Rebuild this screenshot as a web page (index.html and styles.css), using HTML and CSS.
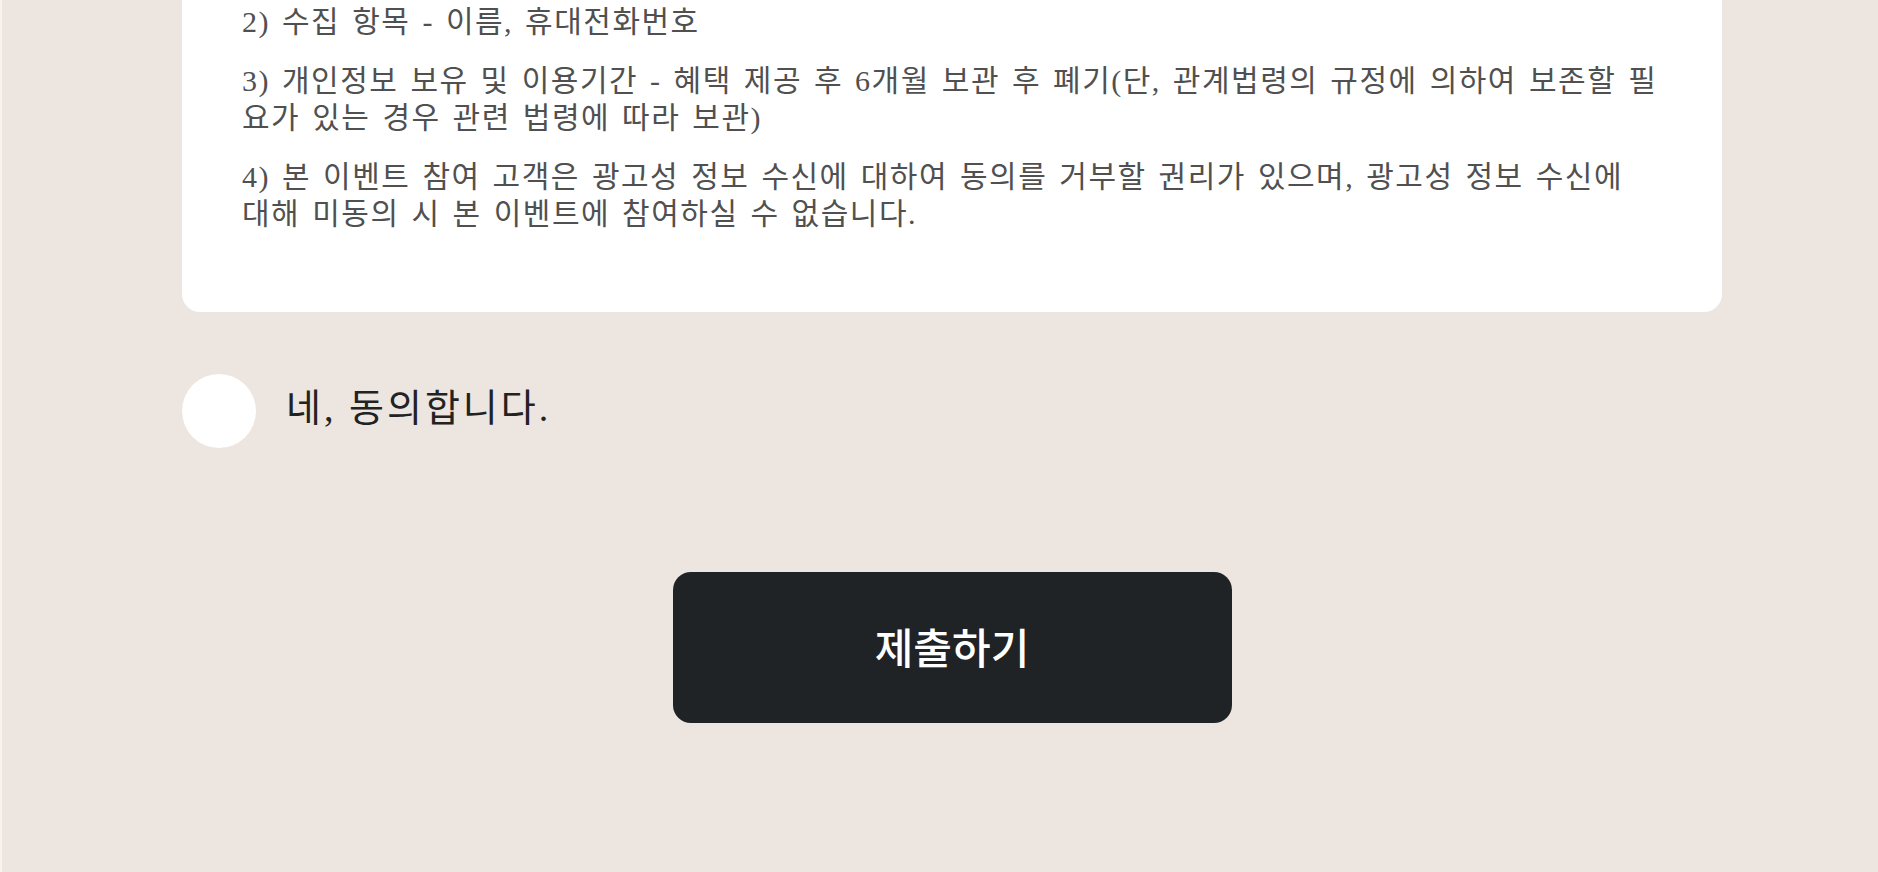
FILE: index.html
```html
<!DOCTYPE html>
<html lang="ko">
<head>
  <meta charset="UTF-8" />
  <title>이벤트 참여</title>
  <link rel="stylesheet" href="styles.css">
</head>
<body>
  <div class="wrap">
    <!-- 개인정보 수집 안내 -->
    <div class="terms">
      <p>2) 수집 항목 - 이름, 휴대전화번호</p>
      <p>3) 개인정보 보유 및 이용기간 - 혜택 제공 후 6개월 보관 후 폐기(단, 관계법령의 규정에 의하여 보존할 필요가 있는 경우 관련 법령에 따라 보관)</p>
      <p>4) 본 이벤트 참여 고객은 광고성 정보 수신에 대하여 동의를 거부할 권리가 있으며, 광고성 정보 수신에 대해 미동의 시 본 이벤트에 참여하실 수 없습니다.</p>
    </div>

    <label class="agree">
      <span class="agree-check"></span>
      <span class="agree-text">네, 동의합니다.</span>
    </label>

    <div class="submit-row">
      <button class="submit-btn">제출하기</button>
    </div>
  </div>
</body>
</html>
```

FILE: styles.css
```css
html, body {
  height: 100%;
}
body {
  margin: 0;
  padding-left: 24px;
  background-color: #ece5e0;
  border-left: 2px solid #f6f3f0;
  box-sizing: border-box;
  overflow: hidden;
}
.wrap {
  width: 1540px;
  margin: 0 auto;
}

/* 약관 박스 */
.terms {
  background-color: #fff;
  border-radius: 0 0 18px 18px;
  padding: 3px 60px 80px;
  font-family: "Liberation Serif", "Noto Sans CJK KR", serif;
  font-size: 30px;
  line-height: 37px;
  letter-spacing: 1.5px;
  word-spacing: 3px;
  word-break: break-all;
  color: #505050;
}
.terms p {
  margin: 0 0 22px;
}
.terms p:last-child {
  margin-bottom: 0;
}

/* 동의 체크 */
.agree {
  display: flex;
  align-items: center;
  gap: 30px;
  margin-top: 62px;
  cursor: pointer;
}
.agree-check {
  width: 74px;
  height: 74px;
  border-radius: 50%;
  background-color: #fff;
  flex-shrink: 0;
}
.agree-text {
  font-family: "Liberation Serif", "Noto Sans CJK KR", serif;
  font-size: 38px;
  line-height: 1;
  letter-spacing: 3px;
  color: #222;
  margin-top: -6px;
}

/* 제출 버튼 */
.submit-row {
  display: flex;
  justify-content: center;
  margin-top: 124px;
}
.submit-btn {
  width: 559px;
  height: 151px;
  border: none;
  border-radius: 18px;
  background-color: #202326;
  color: #fff;
  font-family: "Noto Sans CJK KR", sans-serif;
  font-size: 42px;
  font-weight: 500;
  padding: 0 0 4px;
  cursor: pointer;
}
```
